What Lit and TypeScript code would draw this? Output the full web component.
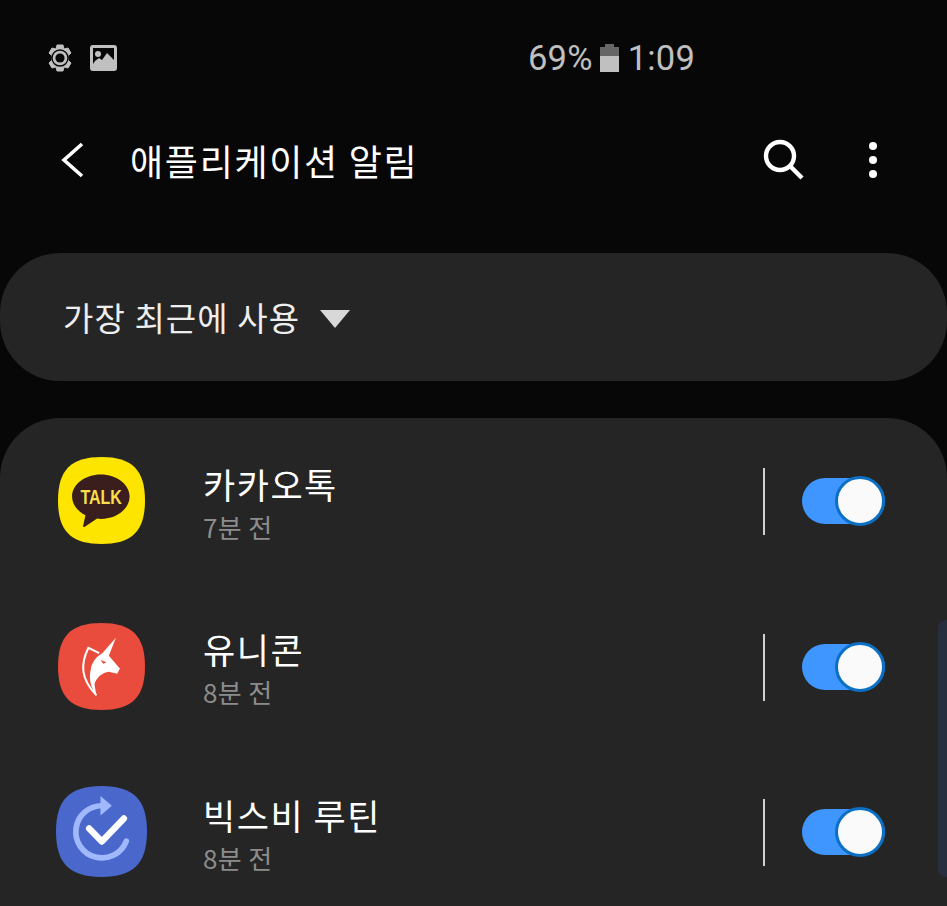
import { LitElement, html, css, svg } from 'lit';
import { customElement } from 'lit/decorators.js';

const squircle = (x: number, y: number, s: number, fill: string) => {
  // superellipse-ish app icon shape
  const k = s * 0.15;
  const r = x + s;
  const b = y + s;
  const m = s / 2;
  return svg`<path fill=${fill} d="M${x + m} ${y} C${r - k} ${y} ${r} ${y + k} ${r} ${y + m} C${r} ${b - k} ${r - k} ${b} ${x + m} ${b} C${x + k} ${b} ${x} ${b - k} ${x} ${y + m} C${x} ${y + k} ${x + k} ${y} ${x + m} ${y}Z"/>`;
};

const kakaoIcon = html`<svg class="app-icon" viewBox="55 37 260 260">
  ${squircle(55, 37, 260, '#fee500')}
  <path fill="#3a1d1d" d="M183 89c-47 0-86 29-86 66 0 24 16 44 40 56l-7 32c-1 3 2 4 4 3l38-25c4 0 7 1 11 1 47 0 86-30 86-67s-39-66-86-66z"/>
  <text x="184" y="177" text-anchor="middle" class="talk" textLength="124" lengthAdjust="spacingAndGlyphs">TALK</text>
</svg>`;

const unicornIcon = html`<svg class="app-icon" viewBox="55 38 260 260">
  ${squircle(55, 38, 260, '#e94b3c')}
  <path fill="none" stroke="#fff" stroke-width="6" d="M178 128 146 112C122 160 122 205 170 254"/>
  <path fill="#fff" d="M188 128 228 82 207 136 240 174 232 190 207 184C188 186 170 200 164 222L170 256C154 232 146 206 153 176 156 156 170 138 188 128Z"/>
  <path fill="#e94b3c" d="M182 148 200 156 190 160Z"/>
</svg>`;

const routineIcon = html`<svg class="app-icon routine" viewBox="48 38 272 272">
  ${squircle(48, 38, 272, '#4a68cc')}
  <path fill="none" stroke="#a0b9fd" stroke-width="17" stroke-linecap="round" d="M187 97A78 78 0 1 0 258 203"/>
  <path fill="#a0b9fd" d="M181 68 215 97 181 126Z"/>
  <path fill="none" stroke="#fff" stroke-width="19" stroke-linecap="round" stroke-linejoin="round" d="M147 165 185 204 251 135"/>
</svg>`;

const rows = [
  { name: '카카오톡', time: '7분 전', icon: kakaoIcon },
  { name: '유니콘', time: '8분 전', icon: unicornIcon },
  { name: '빅스비 루틴', time: '8분 전', icon: routineIcon },
];

@customElement('app-root')
export class AppRoot extends LitElement {
  static styles = css`
    :host {
      display: block;
      position: relative;
      width: 947px;
      height: 906px;
      overflow: hidden;
      background: #070707;
      font-family: 'Noto Sans CJK KR', 'Noto Sans', sans-serif;
      color: #fff;
    }
    .status {
      height: 116px;
      display: flex;
      align-items: center;
      padding: 0 252px 0 46px;
      color: #c0c0c0;
    }
    .status-left {
      display: flex;
      align-items: center;
      gap: 16px;
      flex: 1;
    }
    .status-right {
      display: flex;
      align-items: center;
      font-family: 'Roboto', sans-serif;
      font-size: 34.5px;
      letter-spacing: 0.2px;
    }
    .battery {
      margin: 0 9px 0 7px;
    }
    .appbar {
      height: 88px;
      display: flex;
      align-items: center;
      padding: 0 69px 0 60px;
    }
    .title {
      flex: 1;
      margin-left: 44px;
      font-size: 36px;
      font-weight: 400;
      letter-spacing: 1.7px;
    }
    .search {
      margin-right: 63px;
    }
    .sort {
      margin-top: 49px;
      height: 128px;
      border-radius: 60px;
      background: #252525;
      display: flex;
      align-items: center;
      padding-left: 63px;
      gap: 20px;
      font-size: 33px;
      letter-spacing: 1.1px;
      color: #eee;
    }
    .caret {
      margin-top: 4px;
    }
    .card {
      margin-top: 37px;
      padding-top: 1px;
      height: 540px;
      border-radius: 60px 60px 0 0;
      background: #252525;
    }
    .row {
      height: 165.5px;
      display: flex;
      align-items: center;
      padding-right: 62px;
    }
    .icon-box {
      width: 203px;
      padding-left: 58px;
      margin-top: -2px;
      box-sizing: border-box;
      display: flex;
    }
    .app-icon {
      width: 87px;
      height: 87px;
      display: block;
    }
    .app-icon.routine {
      width: 91px;
      height: 91px;
      margin-left: -2px;
    }
    .talk {
      font-family: 'Liberation Sans', sans-serif;
      font-weight: 700;
      font-size: 58px;
      fill: #f9df4a;
    }
    .text {
      flex: 1;
      padding-top: 3px;
    }
    .name {
      font-size: 35px;
      line-height: 44px;
      letter-spacing: 1.5px;
    }
    .time {
      margin-top: 3px;
      font-size: 26px;
      line-height: 36px;
      color: #8c8c8c;
      letter-spacing: 0.4px;
    }
    .divider {
      width: 2px;
      height: 67px;
      background: #d0d0d0;
      margin-right: 37px;
    }
    .toggle {
      position: relative;
      width: 83px;
      height: 46px;
      margin-top: -1px;
      border-radius: 23px;
      background: #3f96ff;
    }
    .thumb {
      position: absolute;
      right: 0;
      top: -2px;
      width: 50px;
      height: 50px;
      box-sizing: border-box;
      border-radius: 50%;
      background: #fafafa;
      border: 3px solid #0b6fc4;
    }
    .scrollbar {
      position: absolute;
      right: 0;
      top: 620px;
      width: 9px;
      height: 257px;
      border-radius: 8px 0 0 8px;
      background: #282e3e;
    }
  `;

  render() {
    return html`
      <div class="status">
        <div class="status-left">
          <svg width="28" height="28" viewBox="0 0 28 28">
            <path fill="#c0c0c0" d="M11 1h6l1 4 4-1 3 5-3 3v4l3 3-3 5-4-1-1 4h-6l-1-4-4 1-3-5 3-3v-4L3 9l3-5 4 1z" stroke="#c0c0c0" stroke-linejoin="round" stroke-width="1"/>
            <circle cx="14" cy="14" r="8" fill="none" stroke="#070707" stroke-width="1.4"/>
            <circle cx="14" cy="14" r="4.6" fill="#070707"/>
          </svg>
          <svg width="27" height="26" viewBox="0 0 27 26">
            <rect width="27" height="26" rx="3" fill="#c0c0c0"/>
            <path fill="#070707" d="M3 3h21v12l-3-3-4-4-5 7-3-2-4 3-2 3z"/>
            <circle cx="8" cy="9" r="3" fill="#c0c0c0"/>
          </svg>
        </div>
        <div class="status-right">
          <span>69%</span>
          <svg class="battery" width="19" height="28" viewBox="0 0 19 28">
            <path fill="#666" d="M5 0h9v3h5v9H0V3h5z"/>
            <rect y="12" width="19" height="16" fill="#c0c0c0"/>
          </svg>
          <span>1:09</span>
        </div>
      </div>
      <div class="appbar">
        <svg width="26" height="38" viewBox="0 0 26 38">
          <path fill="none" stroke="#fff" stroke-width="3.6" d="M22 3 4 19l18 16"/>
        </svg>
        <div class="title">애플리케이션 알림</div>
        <svg class="search" width="42" height="42" viewBox="0 0 42 42">
          <circle cx="17" cy="17" r="14" fill="none" stroke="#fff" stroke-width="4.4"/>
          <path stroke="#fff" stroke-width="4.4" d="M27 27l12 12"/>
        </svg>
        <svg width="10" height="38" viewBox="0 0 10 38">
          <circle cx="5" cy="5" r="4" fill="#fff"/>
          <circle cx="5" cy="19" r="4" fill="#fff"/>
          <circle cx="5" cy="33" r="4" fill="#fff"/>
        </svg>
      </div>
      <div class="sort">
        <span>가장 최근에 사용</span>
        <svg class="caret" width="30" height="18" viewBox="0 0 30 18"><path fill="#d8d8d8" d="M0 0h30L15 18z"/></svg>
      </div>
      <div class="card">
        ${rows.map(
          (r) => html`
            <div class="row">
              <div class="icon-box">${r.icon}</div>
              <div class="text">
                <div class="name">${r.name}</div>
                <div class="time">${r.time}</div>
              </div>
              <div class="divider"></div>
              <div class="toggle"><div class="thumb"></div></div>
            </div>
          `
        )}
      </div>
      <div class="scrollbar"></div>
    `;
  }
}
